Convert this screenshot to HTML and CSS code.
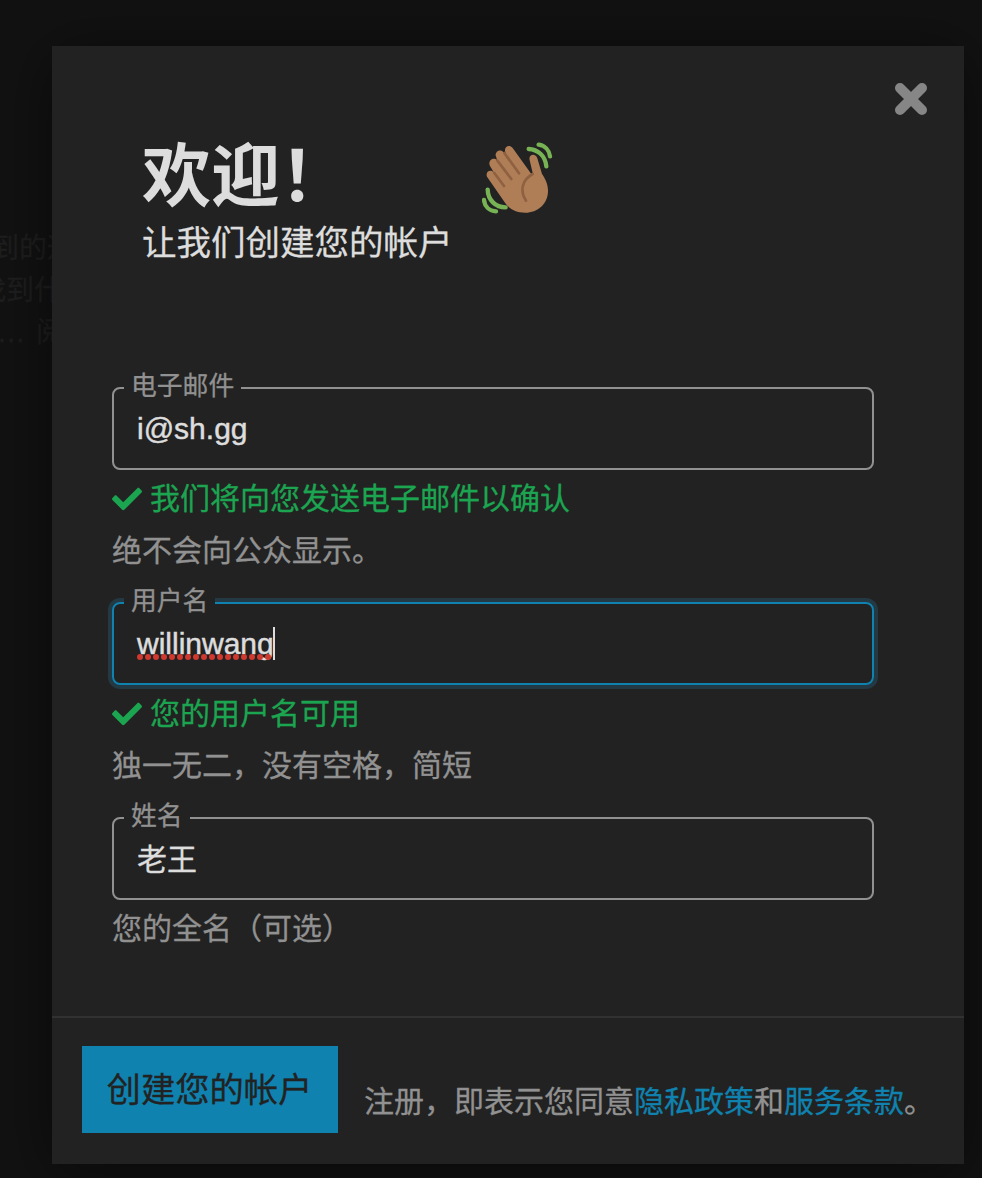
FILE: index.html
```html
<!DOCTYPE html>
<html lang="zh-CN">
<head>
<meta charset="utf-8">
<title>欢迎</title>
<link rel="stylesheet" href="styles.css">
</head>
<body>
<div class="stage">
  <div class="backdrop">
    <p class="excerpt">到的通</p>
    <p class="excerpt excerpt-second">找到什</p>
    <p class="excerpt excerpt-more"><span class="dots">...</span>阅</p>
  </div>
  <main class="modal">
    <header class="header">
      <div class="titles">
        <h1>欢迎！</h1>
        <p class="subtitle">让我们创建您的帐户</p>
      </div>
      <svg class="wave" viewBox="36 36 216 216" aria-hidden="true">
        <path fill="#af7e57" d="M51 140C45 125 62 115 72 128L60 108C52 92 71 79 81 91L79 82C70 67 90 53 101 67L107 69C99 54 115 40 128 54L184 132L188 129L179 91C174 71 198 69 202 85L216 132C226 146 234 163 234 182C234 222 203 248 166 248C136 248 119 237 105 218Z"/>
        <g class="creases">
          <path d="M73 129L102 168M82 92L124 147M103 69L147 130M188 132C157 149 148 181 168 212"/>
        </g>
        <g class="motion">
          <path d="M206 44C225 47 238 61 240 79M176 57C203 58 226 77 229 109M53 179C54 210 76 232 107 232M42 210C44 230 58 243 78 244"/>
        </g>
      </svg>
      <svg class="close" viewBox="0 0 34 34" role="img" aria-label="关闭"><path d="M6 6L28 28M28 6L6 28"/></svg>
    </header>
    <form class="form">
      <div class="field">
        <div class="input"><span class="label">电子邮件</span><span class="latin">i@sh.gg</span></div>
        <p class="tip"><svg class="check" viewBox="0 0 512 512"><path d="M173.900 439.400L7.500 273c-10-10-10-26.200 0-36.200l36.200-36.200c10-10 26.200-10 36.200 0L192 312.700 432.100 72.600c10-10 26.200-10 36.200 0l36.200 36.200c10 10 10 26.200 0 36.200L210.100 439.400c-10 10-26.200 10-36.200 0z"/></svg>我们将向您发送电子邮件以确认</p>
        <p class="hint">绝不会向公众显示。</p>
      </div>
      <div class="field">
        <div class="input focused"><span class="label">用户名</span><span class="latin spelling">willinwang<svg class="squiggle" width="138" height="6"><path d="M3 3H136"/></svg></span><i class="caret"></i></div>
        <p class="tip"><svg class="check" viewBox="0 0 512 512"><path d="M173.900 439.400L7.500 273c-10-10-10-26.200 0-36.200l36.200-36.200c10-10 26.200-10 36.200 0L192 312.700 432.100 72.600c10-10 26.200-10 36.200 0l36.200 36.200c10 10 10 26.200 0 36.200L210.100 439.400c-10 10-26.200 10-36.200 0z"/></svg>您的用户名可用</p>
        <p class="hint">独一无二，没有空格，简短</p>
      </div>
      <div class="field">
        <div class="input"><span class="label">姓名</span>老王</div>
        <p class="hint hint-only">您的全名（可选）</p>
      </div>
    </form>
    <footer class="footer">
      <button class="submit" type="button">创建您的帐户</button>
      <p class="terms">注册，即表示您同意<a>隐私政策</a>和<a>服务条款</a>。</p>
    </footer>
  </main>
</div>
</body>
</html>
```
FILE: styles.css
```css
* { box-sizing: border-box; }
body {
  margin: 0;
  background: #121212;
  color: #919191;
  font: 30px/52px "Liberation Sans", "Noto Sans CJK SC", sans-serif;
  -webkit-text-stroke: 0.3px currentColor;
}
h1, p { margin: 0; }
.stage {
  display: grid;
  width: 982px;
  height: 1178px;
  overflow: hidden;
}
.backdrop, .modal { grid-area: 1 / 1; }
.backdrop {
  padding-top: 228px;
  margin-left: -9px;
  color: #1e1e1e;
  font-size: 28px;
  line-height: 42px;
}
.excerpt { white-space: nowrap; }
.excerpt-second { margin-left: -13px; }
.excerpt-more { display: flex; padding-left: 7px; }
.dots { width: 38px; letter-spacing: 1.5px; }
.modal {
  position: relative;
  display: flex;
  flex-direction: column;
  width: 912px;
  height: 1118px;
  margin: 46px 0 0 52px;
  background: #222;
  box-shadow: 0 8px 60px rgba(0, 0, 0, 0.5);
}
.header {
  display: flex;
  height: 341px;
  padding: 87px 36px 0 91px;
  color: #ddd;
}
.titles { width: 339px; }
h1 {
  margin-left: -1px;
  font-size: 69px;
  line-height: 90px;
  font-weight: 700;
  -webkit-text-stroke: 0;
}
.subtitle {
  margin: -2px 0 0 -1px;
  font-size: 34.500px;
  line-height: 44px;
}
.wave { width: 72px; height: 72px; margin-top: 9px; }
.wave g { fill: none; stroke-linecap: round; }
.creases { stroke: #8f6140; stroke-width: 8; }
.motion { stroke: #77b255; stroke-width: 13; }
.close {
  width: 34px;
  height: 34px;
  margin: -51px 0 0 auto;
}
.close path { stroke: #868686; stroke-width: 10; stroke-linecap: round; }
.form {
  display: flex;
  flex-direction: column;
  gap: 24px;
  width: 762px;
  height: 629px;
  margin-left: 60px;
}
.input {
  position: relative;
  display: flex;
  height: 83px;
  padding: 15px 23px;
  border: 2px solid #919191;
  border-radius: 8px;
  color: #ddd;
  line-height: 52px;
}
.focused {
  border-color: #0f82af;
  box-shadow: 0 0 0 4px #233944;
}
.latin { margin-top: -1px; -webkit-text-stroke-width: 0.5px; }
.label {
  position: absolute;
  top: -21px;
  left: 10px;
  padding: 0 7px;
  background: #222;
  color: #919191;
  font-size: 25.800px;
  line-height: 36px;
}
.spelling { position: relative; }
.squiggle { position: absolute; left: 0; top: 36px; }
.squiggle path {
  stroke: #d0392e;
  stroke-width: 6;
  stroke-linecap: round;
  stroke-dasharray: 0 8;
}
.caret { width: 2px; height: 33px; margin: 8px 0 0 -1px; background: #ddd; }
.tip {
  display: flex;
  align-items: center;
  gap: 8px;
  height: 52px;
  margin-top: 3px;
  margin-bottom: -1px;
  color: #1ca551;
}
.check { width: 30px; height: 30px; margin-top: -1px; fill: currentColor; }
.hint { line-height: 54px; }
.hint-only { margin-top: 2px; }
.footer {
  display: flex;
  height: 148px;
  padding: 28px 30px 0;
  border-top: 2px solid #313131;
}
.submit {
  width: 256px;
  height: 87px;
  padding: 0 1px 0 0;
  border: 0;
  background: #0f82af;
  color: #222;
  font: inherit;
  font-size: 34.300px;
}
.terms { margin: 30px 0 0 26px; white-space: nowrap; }
.terms a { color: #0f82af; }
```
